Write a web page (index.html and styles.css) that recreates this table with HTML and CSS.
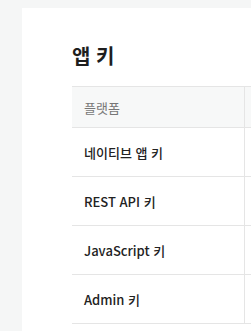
FILE: index.html
```html
<!DOCTYPE html>
<html lang="ko">
<head>
<meta charset="utf-8">
<link rel="stylesheet" href="styles.css">
</head>
<body>
<div class="page">
  <section class="card">
    <h2 class="title">앱 키</h2>
    <table class="keys">
      <thead>
        <tr><th class="c1">플랫폼</th><th class="c2"></th></tr>
      </thead>
      <tbody>
        <tr><td class="c1">네이티브 앱 키</td><td class="c2"></td></tr>
        <tr><td class="c1">REST API 키</td><td class="c2"></td></tr>
        <tr><td class="c1">JavaScript 키</td><td class="c2"></td></tr>
        <tr><td class="c1">Admin 키</td><td class="c2"></td></tr>
      </tbody>
    </table>
  </section>
</div>
</body>
</html>
```
FILE: styles.css
```css
html, body {
  margin: 0;
  padding: 0;
  overflow: hidden;
  background: #f5f6f6;
  font-family: "Noto Sans CJK KR", "Noto Sans", sans-serif;
}
.page {
  padding: 8px 0 0 22px;
}
.card {
  background: #fff;
  padding: 33px 0 40px 50px;
  width: 600px;
  min-height: 400px;
}
.title {
  margin: 0 0 16px;
  font-size: 20px;
  line-height: 29px;
  font-weight: 700;
  color: #1e1e1e;
}
.keys {
  border-collapse: collapse;
  width: 400px;
  table-layout: fixed;
}
.keys th, .keys td {
  border-top: 1px solid #e5e5e5;
  border-bottom: 1px solid #e5e5e5;
  text-align: left;
  padding: 0 12px;
}
.keys .c1 { width: 148px; border-right: 1px solid #e5e5e5; }
.keys th {
  height: 40px;
  background: #f7f8f8;
  font-size: 13px;
  font-weight: 400;
  color: #777;
}
.keys td {
  height: 48px;
  font-size: 13px;
  font-weight: 500;
  color: #222;
}
```
